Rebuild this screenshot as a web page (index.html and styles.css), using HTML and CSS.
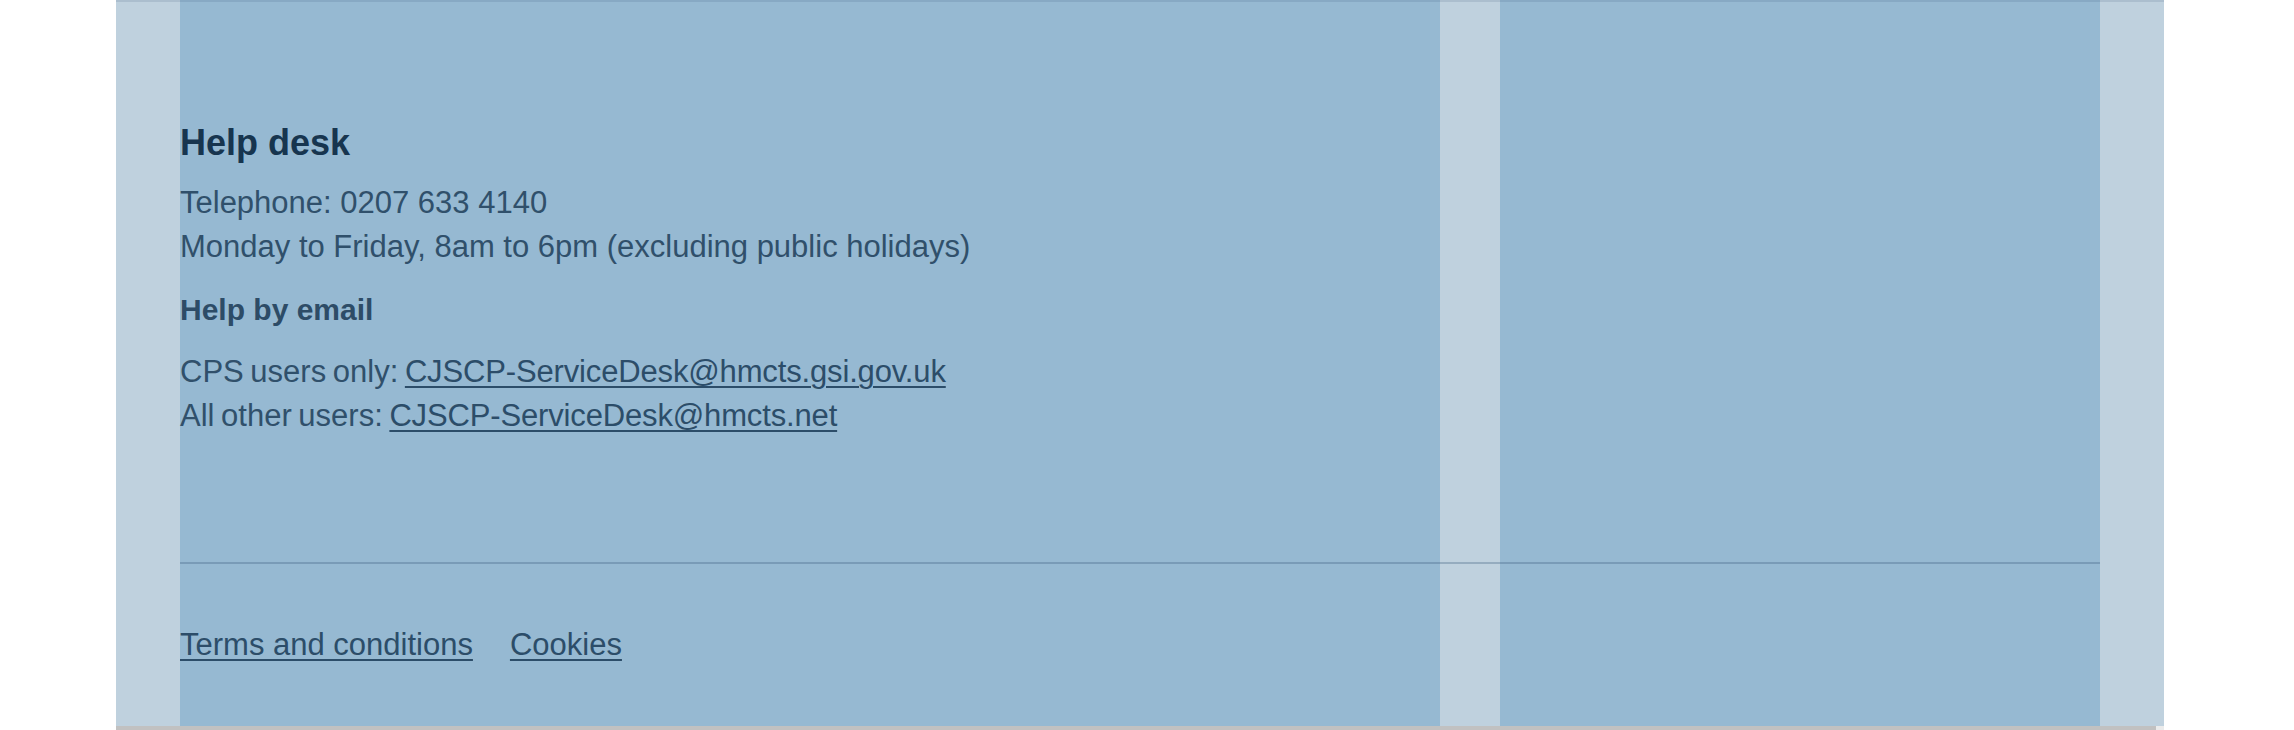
FILE: index.html
```html
<!DOCTYPE html>
<html lang="en">
<head>
<meta charset="utf-8">
<title>Footer</title>
<link rel="stylesheet" href="styles.css">
</head>
<body>
<div class="page">
  <footer class="footer">
    <div class="content">
      <div class="meta">
        <h2 class="heading">Help desk</h2>
        <p class="text">Telephone: 0207 633 4140<br>Monday to Friday, 8am to 6pm (excluding public holidays)</p>
        <h3 class="subheading">Help by email</h3>
        <p class="text text-email">CPS users only: <a class="link link-email" href="#">CJSCP-ServiceDesk@hmcts.gsi.gov.uk</a><br>All other users: <a class="link link-email" href="#">CJSCP-ServiceDesk@hmcts.net</a></p>
      </div>
      <hr class="rule">
      <ul class="links">
        <li><a class="link" href="#">Terms and conditions</a></li>
        <li><a class="link" href="#">Cookies</a></li>
      </ul>
      <div class="gap-overlay"></div>
    </div>
  </footer>
  <div class="scrollbar"></div>
</div>
</body>
</html>
```
FILE: styles.css
```css
body {
  margin: 0;
  background: #ffffff;
  font-family: "Liberation Sans", Arial, sans-serif;
}

.page {
  height: 730px;
  overflow: hidden;
}

.footer {
  position: relative;
  margin-left: 116px;
  width: 2048px;
  height: 726px;
  padding: 0 64px;
  box-sizing: border-box;
  background: #bfd1de;
}

.footer::before {
  content: "";
  position: absolute;
  left: 0;
  right: 0;
  top: 0;
  height: 2px;
  background: rgba(50, 80, 110, 0.14);
  z-index: 3;
}

.content {
  position: relative;
  height: 100%;
  box-sizing: border-box;
  padding-top: 121px;
  background: #96b9d2;
  display: grid;
  grid-template-columns: 1260px 600px;
  column-gap: 60px;
  align-content: start;
}

.gap-overlay {
  position: absolute;
  top: 0;
  bottom: 0;
  left: 1260px;
  width: 60px;
  background: #bfd1de;
  z-index: 1;
}

.meta {
  grid-column: 1;
}

.heading {
  margin: 0 0 16px;
  font-size: 36px;
  line-height: 44px;
  font-weight: 700;
  color: #17354f;
}

.text {
  margin: 0;
  font-size: 31px;
  line-height: 44px;
  color: #30506b;
}

.text-email {
  word-spacing: -2px;
}

.subheading {
  margin: 19px 0 18px;
  font-size: 30px;
  line-height: 44px;
  font-weight: 700;
  color: #2d4c67;
}

.rule {
  grid-column: 1 / -1;
  position: relative;
  z-index: 2;
  margin: 124px 0 0;
  height: 2px;
  border: 0;
  background: rgba(62, 93, 128, 0.32);
}

.links {
  grid-column: 1;
  margin: 59px 0 0;
  padding: 0;
  list-style: none;
  display: flex;
  gap: 37px;
}

.links li {
  font-size: 31px;
  line-height: 44px;
}

.link {
  color: #2c4d69;
  text-decoration: underline;
  text-decoration-thickness: 2px;
  text-underline-offset: 4px;
}

.link-email {
  letter-spacing: -0.15px;
}

.scrollbar {
  margin-left: 116px;
  width: 2048px;
  height: 4px;
  background: linear-gradient(to right, #c1c1c1 2040px, #ebebeb 2040px);
}
```
